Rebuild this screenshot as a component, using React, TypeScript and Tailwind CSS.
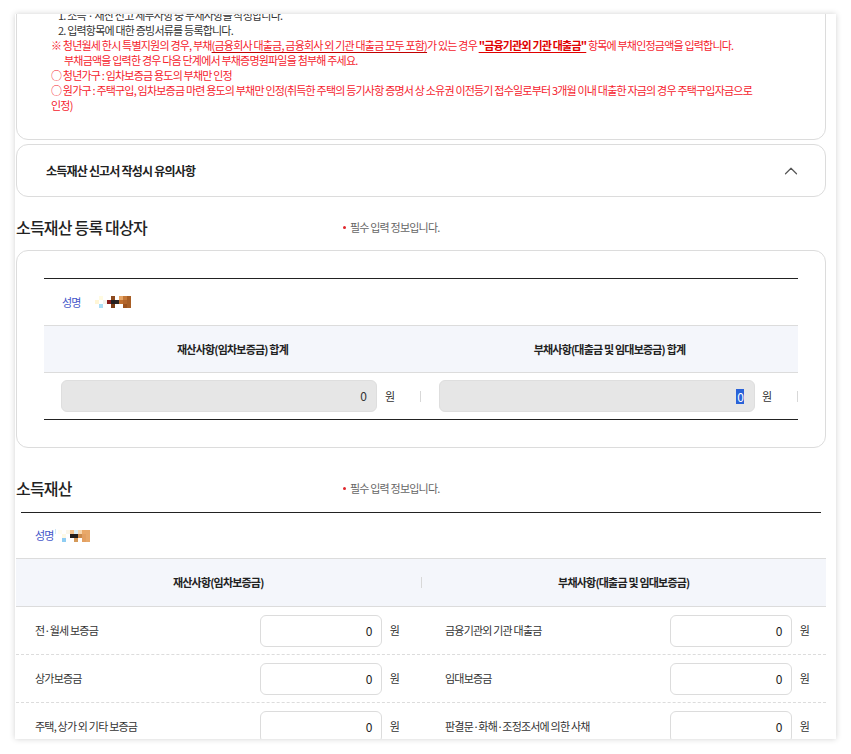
import { ChevronUp } from "lucide-react";

type Block = [number, number, string];

const blurA: Block[] = [
  [0, 1, "#fff6d6"], [1, 0, "#fffbe2"], [1, 2, "#a9def6"], [2, 1, "#f3f3ee"],
  [3, 1, "#8a1d1d"], [4, 0, "#8d4a1f"], [4, 1, "#231f1f"], [4, 2, "#7a3c14"],
  [5, 1, "#2b2322"], [6, 0, "#e6a566"], [6, 1, "#c06f2f"], [7, 0, "#c47838"],
  [7, 1, "#b3652a"], [7, 2, "#9c531f"], [8, 0, "#a85f26"], [8, 1, "#a85f26"], [8, 2, "#a85f26"],
];

const blurB: Block[] = [
  [0, 0, "#fffdf0"], [1, 1, "#fef9e4"], [1, 2, "#8fcdf2"], [2, 0, "#fbf6e8"],
  [3, 0, "#f0c08c"], [3, 1, "#1f1c1c"], [4, 0, "#d9eef8"], [4, 1, "#201d1d"], [4, 2, "#d59a5a"],
  [5, 0, "#f8d7ae"], [5, 1, "#c98a4c"], [6, 0, "#e9a868"], [6, 1, "#e3a062"], [6, 2, "#e3a062"],
  [7, 0, "#e7a86a"], [7, 1, "#e7a86a"], [7, 2, "#e7a86a"],
];

function NameBlur({ blocks }: { blocks: Block[] }) {
  return (
    <svg width="36" height="12" viewBox="0 0 36 12">
      {blocks.map(([x, y, c], i) => (
        <rect key={i} x={x * 4} y={y * 4} width="4" height="4" fill={c} />
      ))}
    </svg>
  );
}

const rows = [
  ["전·월세 보증금", "금융기관외 기관 대출금"],
  ["상가보증금", "임대보증금"],
  ["주택, 상가 외 기타 보증금", "판결문·화해·조정조서에 의한 사채"],
];

function Required() {
  return (
    <div className="flex items-center gap-[4px] text-[11px] text-[#666]">
      <span className="w-[3px] h-[3px] rounded-full bg-[#e0262b]"></span>
      필수 입력 정보입니다.
    </div>
  );
}

function AmountBox() {
  return (
    <div className="w-[122px] h-[32px] border border-[#dcdcdc] rounded-[6px] bg-white flex items-center justify-end pr-[9px] text-[12px] text-[#222]">
      0
    </div>
  );
}

export default function App() {
  return (
    <div className="w-[851px] h-[754px] bg-white pt-[14px] font-['Noto_Sans_CJK_KR','Noto_Sans',sans-serif] tracking-[-0.05em] text-[#333]">
      <div className="ml-[15px] w-[821px] h-[725px] overflow-hidden bg-white shadow-[0_0_6px_rgba(0,0,0,0.18)] pl-[1px] pr-[10px]">
        {/* notice card (scrolled) */}
        <div className="-mt-[31px] border border-[#dcdcdc] rounded-b-[12px] pt-[24px] pb-[26px] pl-[34px] text-[11px] leading-[15px]">
          <div className="pl-[7px] text-[#333]">1. 소득 · 재산 신고 세부사항 중 부채사항을 작성합니다.</div>
          <div className="pl-[7px] text-[#333]">2. 입력항목에 대한 증빙서류를 등록합니다.</div>
          <div className="text-[#f5222d] whitespace-nowrap">
            ※ 청년월세 한시 특별지원의 경우, 부채
            <span className="underline decoration-[#c00000] underline-offset-2">(금융회사 대출금, 금융회사 외 기관 대출금 모두 포함)</span>
            가 있는 경우 <span className="font-bold text-[#e00000] underline underline-offset-2">"금융기관외 기관 대출금"</span> 항목에 부채인정금액을 입력합니다.
          </div>
          <div className="pl-[13px] text-[#f5222d]">부채금액을 입력한 경우 다음 단계에서 부채증명원파일을 첨부해 주세요.</div>
          <div className="text-[#f5222d]">○ 청년가구 : 임차보증금 용도의 부채만 인정</div>
          <div className="text-[#f5222d] whitespace-nowrap">
            ○ 원가구 : 주택구입, 임차보증금 마련 용도의 부채만 인정(취득한 주택의 등기사항 증명서 상 소유권 이전등기 접수일로부터 3개월 이내 대출한 자금의 경우 주택구입자금으로
          </div>
          <div className="text-[#f5222d]">인정)</div>
        </div>

        {/* accordion */}
        <div className="mt-[4px] h-[53px] border border-[#dcdcdc] rounded-[12px] flex items-center pl-[29px] pr-[23px]">
          <span className="flex-1 text-[12px] font-bold text-[#222]">소득재산 신고서 작성시 유의사항</span>
          <ChevronUp className="w-[22px] h-[22px] text-[#555]" strokeWidth={1.3} />
        </div>

        {/* 등록 대상자 */}
        <div className="mt-[15px] mb-[8px] h-[30px] flex items-center">
          <h2 className="w-[327px] text-[16px] font-medium text-[#222]">소득재산 등록 대상자</h2>
          <Required />
        </div>

        <div className="border border-[#dcdcdc] rounded-[12px] pt-[27px] pb-[27px] px-[27px]">
          <div className="border-t border-[#222]"></div>
          <div className="h-[46px] flex items-center pl-[18px] gap-[14px]">
            <span className="text-[11px] text-[#4456c9]">성명</span>
            <NameBlur blocks={blurA} />
          </div>
          <div className="h-[48px] border-y border-[#dcdcdc] bg-[#f4f6fb] grid grid-cols-2 text-[11px] font-bold text-[#222]">
            <div className="flex items-center justify-center">재산사항(임차보증금) 합계</div>
            <div className="flex items-center justify-center">부채사항(대출금 및 임대보증금) 합계</div>
          </div>
          <div className="h-[47px] grid grid-cols-2 border-b border-[#222]">
            <div className="flex items-center pl-[17px]">
              <div className="w-[316px] h-[32px] rounded-[6px] bg-[#e6e6e6] border border-[#dedede] flex items-center justify-end pr-[10px] text-[12px] text-[#333]">0</div>
              <span className="ml-[8px] text-[11px] text-[#333]">원</span>
              <span className="flex-1"></span>
              <span className="w-px h-[11px] bg-[#d8d8d8]"></span>
            </div>
            <div className="flex items-center pl-[18px]">
              <div className="w-[316px] h-[32px] rounded-[6px] bg-[#e6e6e6] border border-[#dedede] flex items-center justify-end pr-[10px] text-[12px]">
                <span className="bg-[#2a62d8] text-white leading-[15px] px-px">0</span>
              </div>
              <span className="ml-[7px] text-[11px] text-[#333]">원</span>
              <span className="flex-1"></span>
              <span className="w-px h-[11px] bg-[#d8d8d8]"></span>
            </div>
          </div>
        </div>

        {/* 소득재산 */}
        <div className="mt-[25px] mb-[9px] h-[30px] flex items-center">
          <h2 className="w-[327px] text-[16px] font-medium text-[#222]">소득재산</h2>
          <Required />
        </div>
        <div className="mx-[5px] border-t border-[#222]"></div>
        <div className="h-[45px] flex items-center pl-[19px]">
          <span className="text-[11px] text-[#4456c9]">성명</span>
          <span className="ml-[1px] mr-[2px] w-px h-[5px] bg-[#cfe6f7] self-start mt-[16px]"></span>
          <NameBlur blocks={blurB} />
        </div>
        <div className="h-[49px] border-y border-[#dcdcdc] bg-[#f4f6fb] flex text-[11px] font-bold text-[#222]">
          <div className="flex-1 flex items-center justify-center">재산사항(임차보증금)</div>
          <span className="w-px h-[11px] bg-[#d8d8d8] self-center"></span>
          <div className="flex-1 flex items-center justify-center">부채사항(대출금 및 임대보증금)</div>
        </div>
        {rows.map(([left, right], i) => (
          <div key={i} className="h-[48px] grid grid-cols-2 border-b border-dashed border-[#dcdcdc] text-[11px] text-[#333]">
            <div className="flex items-center pl-[19px] pr-[22px]">
              <span className="flex-1">{left}</span>
              <AmountBox />
              <span className="ml-[8px]">원</span>
            </div>
            <div className="flex items-center pl-[24px] pr-[17px]">
              <span className="flex-1">{right}</span>
              <AmountBox />
              <span className="ml-[8px]">원</span>
            </div>
          </div>
        ))}
      </div>
    </div>
  );
}
